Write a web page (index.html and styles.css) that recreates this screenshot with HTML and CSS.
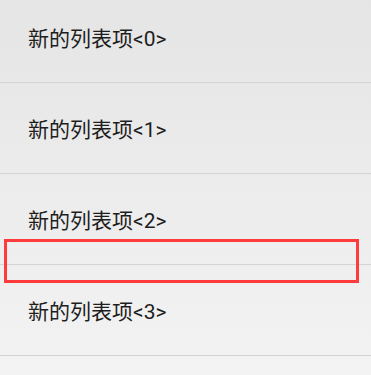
FILE: index.html
```html
<!DOCTYPE html>
<html>
<head>
<meta charset="utf-8">
<link rel="stylesheet" href="styles.css">
</head>
<body>
<div class="screen">
  <ul class="list">
    <li class="item">新的列表项&lt;0&gt;</li>
    <li class="item">新的列表项&lt;1&gt;</li>
    <li class="item">新的列表项&lt;2&gt;</li>
    <li class="item">新的列表项&lt;3&gt;</li>
  </ul>
  <div class="highlight"></div>
</div>
</body>
</html>
```

FILE: styles.css
```css
html, body {
  margin: 0;
  padding: 0;
}
body {
  width: 371px;
  height: 375px;
  overflow: hidden;
}
.screen {
  position: relative;
  width: 371px;
  height: 375px;
  overflow: hidden;
  background: linear-gradient(to bottom, #e5e5e5 0%, #ececec 50%, #f3f3f3 100%);
}
.list {
  list-style: none;
  margin: -8px 0 0 0;
  padding: 0;
}
.item {
  height: 90px;
  border-bottom: 1px solid #d4d4d4;
  display: flex;
  align-items: center;
  padding-left: 28px;
  font-family: Roboto, "Noto Sans CJK SC", sans-serif;
  font-size: 21px;
  color: #1e1e1e;
}
.highlight {
  position: absolute;
  left: 4px;
  top: 239px;
  width: 349px;
  height: 38px;
  border: 3px solid #ff3c3c;
}
```
